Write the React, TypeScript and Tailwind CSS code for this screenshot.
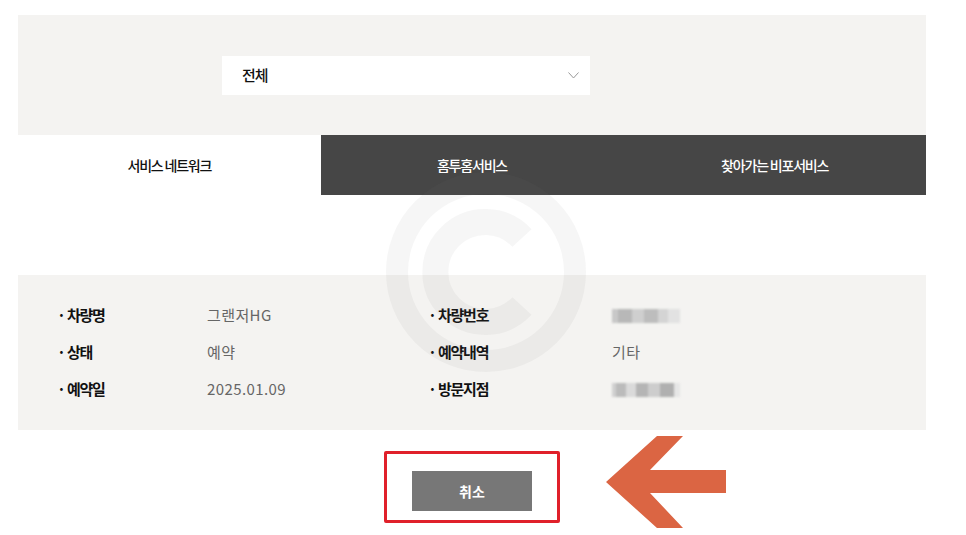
import React from "react";

const KR = "font-['Noto_Sans_CJK_KR','Noto_Sans',sans-serif]";

function Blur({ widths, shades }: { widths: number[]; shades: string[] }) {
  return (
    <div className="flex h-[14px] items-stretch blur-[0.8px]">
      {widths.map((w, i) => (
        <div key={i} style={{ width: w, background: shades[i % shades.length] }} />
      ))}
    </div>
  );
}

function Row({ label, value }: { label: string; value: React.ReactNode }) {
  return (
    <div className="flex h-[37px] items-center">
      <div className="w-[150px] shrink-0 text-[15px] font-bold tracking-[-1.2px] text-[#111]">· {label}</div>
      <div className="text-[15px] tracking-[0.4px] text-[#666]">{value}</div>
    </div>
  );
}

function Row2({ label, value }: { label: string; value: React.ReactNode }) {
  return (
    <div className="flex h-[37px] items-center">
      <div className="w-[184px] shrink-0 text-[15px] font-bold tracking-[-1.2px] text-[#111]">· {label}</div>
      <div className="text-[15px] tracking-[0.4px] text-[#666]">{value}</div>
    </div>
  );
}

export default function App() {
  return (
    <div className={`relative w-[966px] h-[535px] overflow-hidden bg-white ${KR}`}>
      <div className="ml-[18px] w-[908px] pt-[15px]">
        {/* filter panel */}
        <div className="flex h-[120px] items-center bg-[#f4f3f1] pl-[204px]">
          <div className="flex h-[39px] w-[368px] items-center justify-between bg-white pl-[20px] pr-[11px]">
            <span className="text-[15px] font-medium tracking-[-1px] text-[#111]">전체</span>
            <svg width="11" height="7" viewBox="0 0 11 7">
              <polyline points="0.5,0.5 5.5,6 10.5,0.5" fill="none" stroke="#999" strokeWidth="1" />
            </svg>
          </div>
        </div>
        {/* tabs */}
        <div className="grid h-[60px] grid-cols-3">
          <div className="flex items-center justify-center bg-white text-[14px] font-medium tracking-[-1.2px] text-[#111]">서비스 네트워크</div>
          <div className="flex items-center justify-center bg-[#464646] text-[14px] font-medium tracking-[-1.2px] text-white">홈투홈서비스</div>
          <div className="flex items-center justify-center bg-[#464646] text-[14px] font-medium tracking-[-1.2px] text-white">찾아가는 비포서비스</div>
        </div>
        {/* info panel */}
        <div className="mt-[80px] flex h-[155px] items-center bg-[#f4f3f1] pl-[39px]">
          <div className="flex w-[371px] flex-col">
            <Row label="차량명" value="그랜저HG" />
            <Row label="상태" value="예약" />
            <Row label="예약일" value="2025.01.09" />
          </div>
          <div className="flex flex-col">
            <Row2
              label="차량번호"
              value={<Blur widths={[6, 14, 12, 14, 10, 12]} shades={["#c8c8c8", "#b8b8b8", "#cfcfcf", "#bdbdbd", "#d4d4d4", "#e2e2e2"]} />}
            />
            <Row2 label="예약내역" value="기타" />
            <Row2
              label="방문지점"
              value={<Blur widths={[4, 10, 10, 12, 12, 14, 6]} shades={["#d0d0d0", "#bbbbbb", "#dadada", "#b5b5b5", "#cdcdcd", "#b0b0b0", "#e6e6e6"]} />}
            />
          </div>
        </div>
        {/* button area */}
        <div className="relative mt-[21px] flex justify-center">
          <div className="rounded-[2px] border-[3px] border-[#e0202a] px-[25px] pb-[9px] pt-[17px]">
            <button className="flex h-[40px] w-[120px] items-center justify-center bg-[#777777] text-[14px] font-bold text-white">
              취소
            </button>
          </div>
          <svg className="absolute left-[588px] top-[-15px]" width="120" height="92" viewBox="0 0 120 92">
            <polygon
              points="0,46 51,0 77,0 44,34 120,34 120,57 44,57 77,92 51,92"
              fill="#db6543"
            />
          </svg>
        </div>
      </div>
      {/* watermark */}
      <svg className="pointer-events-none absolute left-[386px] top-[172px]" width="200" height="200" viewBox="0 0 200 200">
        <circle cx="100" cy="100" r="89" fill="none" stroke="rgba(118,118,118,0.065)" strokeWidth="22" />
        <path
          d="M 136 66 A 50 50 0 1 0 136 134"
          fill="none"
          stroke="rgba(118,118,118,0.065)"
          strokeWidth="26"
        />
      </svg>
    </div>
  );
}
